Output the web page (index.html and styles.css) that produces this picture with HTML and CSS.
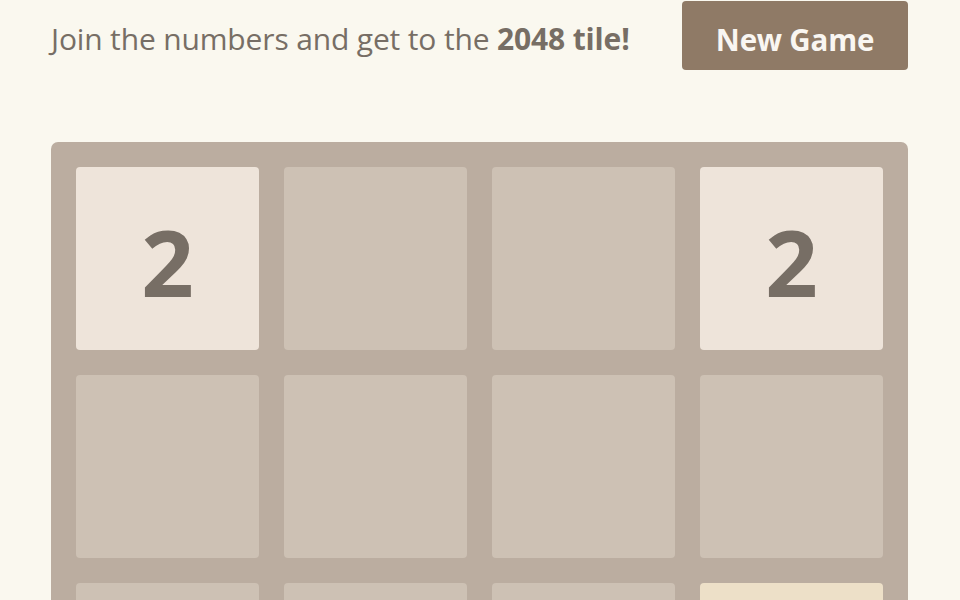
FILE: index.html
```html
<!DOCTYPE html>
<html lang="en">
<head>
<meta charset="utf-8">
<title>2048</title>
<link rel="stylesheet" href="styles.css">
</head>
<body>
<div class="container">
  <div class="above-game">
    <p class="game-intro">Join the numbers and get to the <strong>2048 tile!</strong></p>
    <a class="restart-button">New Game</a>
  </div>
  <div class="game-container">
    <div class="grid">
      <div class="cell tile-2">2</div>
      <div class="cell"></div>
      <div class="cell"></div>
      <div class="cell tile-2">2</div>
      <div class="cell"></div>
      <div class="cell"></div>
      <div class="cell"></div>
      <div class="cell"></div>
      <div class="cell"></div>
      <div class="cell"></div>
      <div class="cell"></div>
      <div class="cell tile-4"></div>
      <div class="cell"></div>
      <div class="cell"></div>
      <div class="cell"></div>
      <div class="cell"></div>
    </div>
  </div>
</div>
</body>
</html>
```

FILE: styles.css
```css
html, body {
  margin: 0;
  padding: 0;
  background: #faf8ef;
}

body {
  font-family: "Open Sans", "Noto Sans", "Liberation Sans", sans-serif;
  color: #776e65;
}

.container {
  width: 857px;
  margin: 0 0 0 51px;
  padding-top: 1px;
}

.above-game {
  display: flex;
  align-items: center;
  justify-content: space-between;
  height: 69px;
}

.game-intro {
  margin: 0;
  font-size: 30px;
  line-height: 72px;
  margin-top: 6px;
  letter-spacing: -0.15px;
}

.game-intro strong {
  font-weight: 700;
}

.restart-button {
  display: block;
  width: 226px;
  height: 65px;
  padding-top: 4px;
  line-height: 69px;
  background: #8f7a66;
  border-radius: 4px;
  color: #f9f6f2;
  font-weight: 700;
  font-size: 29.5px;
  text-align: center;
  letter-spacing: -0.2px;
}

.game-container {
  margin-top: 72px;
  background: #bbada0;
  border-radius: 7px;
  padding: 25px;
}

.grid {
  display: grid;
  grid-template-columns: repeat(4, 183px);
  grid-auto-rows: 183px;
  gap: 25px;
}

.cell {
  background: #cdc1b4;
  border-radius: 4px;
  display: flex;
  align-items: center;
  justify-content: center;
  font-weight: 700;
  font-size: 92px;
  color: #776e65;
  padding-top: 6px;
  box-sizing: border-box;
}

.tile-2 {
  background: #eee4da;
}

.tile-4 {
  background: #ede0c8;
}
```
